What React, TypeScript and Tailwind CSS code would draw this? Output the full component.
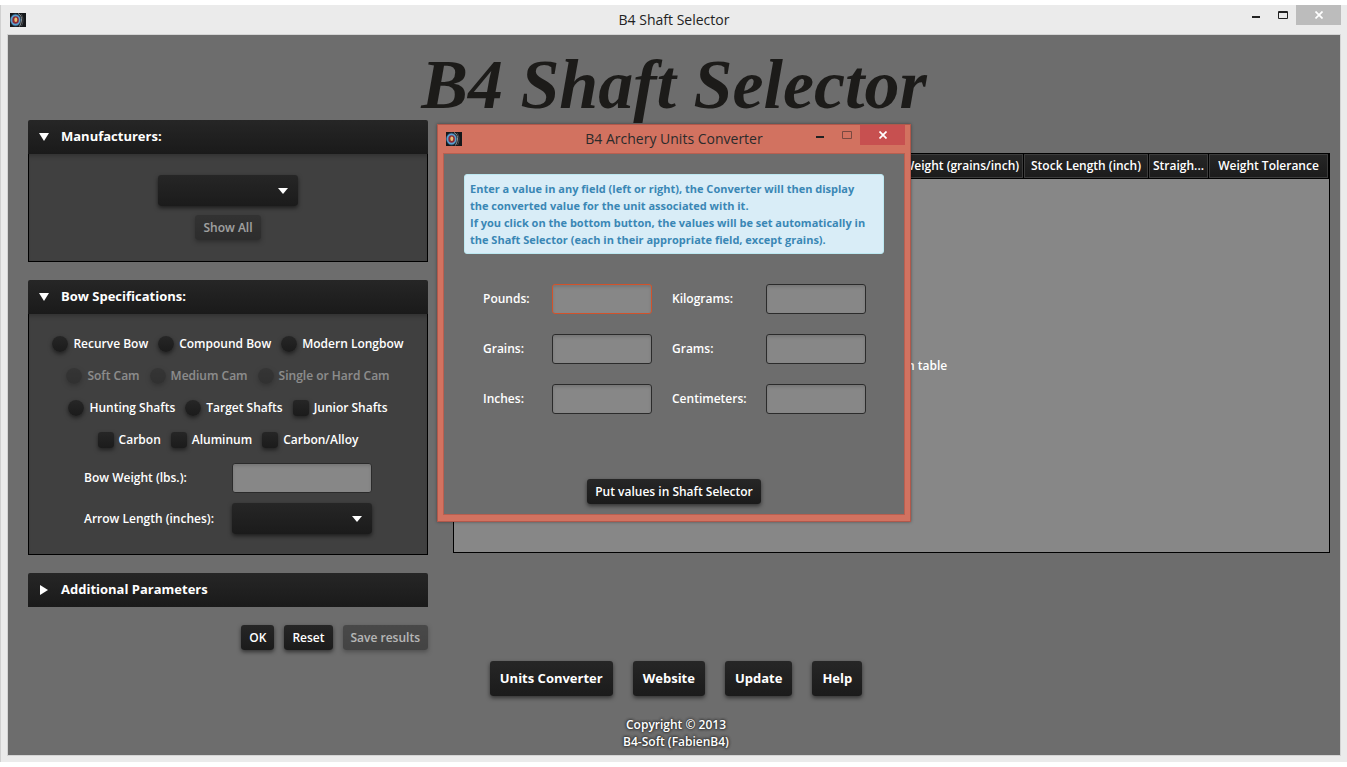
import React from 'react';

const buttonStyle =
  'rounded-[3px] bg-linear-to-b from-[#262626] to-[#1b1b1b] text-white shadow-[0_2px_4px_rgba(0,0,0,0.55)] whitespace-nowrap';
const smallButton = `${buttonStyle} h-[25px] px-2 text-xs font-semibold`;
const fieldStyle =
  'h-[30px] rounded-[3px] border bg-[#878787] px-2 text-xs text-white outline-none shadow-[inset_0_2px_3px_rgba(0,0,0,0.12)]';

const AppIcon = () => (
  <svg width="16" height="14" viewBox="0 0 16 14" aria-hidden="true" className="shrink-0">
    <rect width="16" height="14" fill="#15171a" />
    <ellipse cx="5.5" cy="7" rx="5.5" ry="6.4" fill="#28465c" />
    <ellipse cx="5.5" cy="7" rx="4.9" ry="5.6" fill="#5b9fd0" />
    <ellipse cx="5.6" cy="7" rx="3.3" ry="3.8" fill="#8c2a35" />
    <ellipse cx="5.8" cy="6.8" rx="1.5" ry="2.2" fill="#e8c070" />
    <path d="M8 .5c3 1.500 4 4 3.400 7.500c-.3 2-1 4-2 5.500" fill="none" stroke="#8f9296" />
    <path d="M11 1c2.500 3 2.700 8 .5 12" fill="none" stroke="#484b4f" />
  </svg>
);

const Arrow = ({ open = true }: { open?: boolean }) => (
  <svg width="10" height="10" viewBox="0 0 10 10" fill="#fff" aria-hidden="true" className="shrink-0">
    <path d={open ? 'M0 1h10L5 9z' : 'M1 0v10l8-5z'} />
  </svg>
);

interface WindowButtonsProps {
  disabledMaximize?: boolean;
  closeClass: string;
}

const WindowButtons: React.FC<WindowButtonsProps> = ({ disabledMaximize, closeClass }) => (
  <div className="flex items-start">
    <button type="button" aria-label="Minimize" className="flex h-5 w-[26px] items-center justify-center">
      <svg width="8" height="12" viewBox="0 0 8 12" fill="#222">
        <path d="M0 7h8v2H0z" />
      </svg>
    </button>
    <button
      type="button"
      aria-label="Maximize"
      disabled={disabledMaximize}
      className="flex h-5 w-[27px] items-center justify-center disabled:opacity-50"
    >
      <svg width="10" height="8" viewBox="0 0 10 8" fill="none" stroke="#222">
        <path d={disabledMaximize ? 'M.5.5h9v7h-9z' : 'M.5.5h9v7h-9zM0 1.500h10'} />
      </svg>
    </button>
    <button type="button" aria-label="Close" className={closeClass}>
      <svg width="8" height="8" viewBox="0 0 8 8" stroke="#fff" strokeWidth="1.700">
        <path d="M.5.5l7 7M7.500.5l-7 7" />
      </svg>
    </button>
  </div>
);

interface PanelProps {
  title: string;
  open?: boolean;
  children?: React.ReactNode;
}

const Panel: React.FC<PanelProps> = ({ title, open = true, children }) => (
  <section>
    <button
      type="button"
      aria-expanded={open}
      className="flex h-[34px] w-full items-center gap-3 rounded-t-xs bg-linear-to-b from-[#262626] to-[#1a1a1a] px-[11px] text-[13px] font-bold text-white"
    >
      <Arrow open={open} />
      {title}
    </button>
    {open && (
      <div className="border border-t-0 border-black bg-[#404040] shadow-[inset_0_5px_5px_-3px_rgba(0,0,0,0.25)]">
        {children}
      </div>
    )}
  </section>
);

const Dropdown = ({ id, label }: { id: string; label: string }) => (
  <div className="relative w-[140px]">
    <select id={id} aria-label={label} className={`${buttonStyle} block h-[31px] w-full appearance-none px-2 text-xs`}>
      <option></option>
    </select>
    <svg width="10" height="6" viewBox="0 0 10 6" fill="#fff" className="pointer-events-none absolute top-[13px] right-[10px]">
      <path d="M0 0h10L5 6z" />
    </svg>
  </div>
);

interface Option {
  label: string;
  type: 'radio' | 'checkbox';
  name: string;
  disabled?: boolean;
}

const optionRows: Option[][] = [
  [
    { label: 'Recurve Bow', type: 'radio', name: 'bow' },
    { label: 'Compound Bow', type: 'radio', name: 'bow' },
    { label: 'Modern Longbow', type: 'radio', name: 'bow' },
  ],
  [
    { label: 'Soft Cam', type: 'radio', name: 'cam', disabled: true },
    { label: 'Medium Cam', type: 'radio', name: 'cam', disabled: true },
    { label: 'Single or Hard Cam', type: 'radio', name: 'cam', disabled: true },
  ],
  [
    { label: 'Hunting Shafts', type: 'radio', name: 'shafts' },
    { label: 'Target Shafts', type: 'radio', name: 'shafts' },
    { label: 'Junior Shafts', type: 'checkbox', name: 'junior' },
  ],
  [
    { label: 'Carbon', type: 'checkbox', name: 'carbon' },
    { label: 'Aluminum', type: 'checkbox', name: 'aluminum' },
    { label: 'Carbon/Alloy', type: 'checkbox', name: 'alloy' },
  ],
];

const converterFields = ['Pounds', 'Kilograms', 'Grains', 'Grams', 'Inches', 'Centimeters'];

const OptionItem: React.FC<Option> = ({ label, type, name, disabled }) => (
  <label className={`flex items-center gap-[5px] whitespace-nowrap ${disabled ? 'opacity-40' : ''}`}>
    <input
      type={type}
      name={name}
      disabled={disabled}
      className={`size-4 appearance-none bg-linear-to-b from-[#262626] to-[#1b1b1b] shadow-[0_2px_4px_rgba(0,0,0,0.5)] checked:bg-white ${
        type === 'radio' ? 'rounded-full' : 'rounded-[3px]'
      }`}
    />
    {label}
  </label>
);

const headerCell =
  'h-6 overflow-hidden border border-[#3c3c3c] bg-linear-to-b from-[#262626] to-[#1b1b1b] p-0 text-center font-semibold text-ellipsis whitespace-nowrap';

const ResultsTable = () => (
  <div className="flex h-[400px] flex-col border border-black bg-[#878787]">
    <table className="w-full table-fixed border-separate border-spacing-x-px border-spacing-y-0 bg-black text-xs">
      <colgroup>
        <col />
        <col className="w-[124px]" />
        <col className="w-[124px]" />
        <col className="w-[59px]" />
        <col className="w-[119px]" />
      </colgroup>
      <thead>
        <tr>
          <td className={headerCell}></td>
          <th className={headerCell}>Weight (grains/inch)</th>
          <th className={headerCell}>Stock Length (inch)</th>
          <th className={headerCell}>Straigh...</th>
          <th className={headerCell}>Weight Tolerance</th>
        </tr>
      </thead>
    </table>
    <div className="flex flex-1 items-center justify-center border-t border-black">No content in table</div>
  </div>
);

const UnitsConverter = () => (
  <div
    role="dialog"
    aria-label="B4 Archery Units Converter"
    className="absolute top-[124px] left-[437px] w-[474px] border border-[#b0584b] bg-[#d27260] px-[5px] pb-[6px] shadow-[0_0_3px_rgba(0,0,0,0.4)]"
  >
    <div className="grid h-7 grid-cols-[1fr_auto_1fr] items-center">
      <div className="pl-[3px]">
        <AppIcon />
      </div>
      <h2 className="text-sm font-normal text-[#2b2b2b]">B4 Archery Units Converter</h2>
      <div className="flex justify-end self-start">
        <WindowButtons
          disabledMaximize
          closeClass="flex h-5 w-[45px] items-center justify-center bg-[#c75050]"
        />
      </div>
    </div>
    <div className="border border-[#b85f50] bg-[#6d6d6d] px-5 pt-5 pb-[10px]">
      <p className="rounded-[3px] border border-[#bce8f1] bg-[#d9edf7] p-[5px] text-[11px] leading-[17px] font-bold whitespace-nowrap text-[#3a87b5]">
        Enter a value in any field (left or right), the Converter will then display
        <br />
        the converted value for the unit associated with it.
        <br />
        If you click on the bottom button, the values will be set automatically in
        <br />
        the Shaft Selector (each in their appropriate field, except grains).
      </p>
      <form className="mt-[30px] grid grid-cols-[69px_100px_94px_100px] items-center gap-y-5 pl-[19px]">
        {converterFields.map((field, index) => (
          <React.Fragment key={field}>
            <label htmlFor={field} className={index % 2 ? 'pl-5' : ''}>
              {field}:
            </label>
            <input
              id={field}
              type="text"
              className={`${fieldStyle} ${index % 2 ? 'ml-5 w-[100px]' : 'w-full'} ${
                index === 0 ? 'border-[#d2522a]' : 'border-[#2b2b2b]'
              }`}
            />
          </React.Fragment>
        ))}
      </form>
      <div className="mt-[65px] flex justify-center">
        <button type="button" className={smallButton}>
          Put values in Shaft Selector
        </button>
      </div>
    </div>
  </div>
);

const App = () => {
  return (
    <div className="relative flex min-h-screen flex-col bg-white py-[5px] font-['Open_Sans',sans-serif] text-xs font-semibold text-white">
      <div className="flex flex-1 flex-col border-l border-[#d0d0d0] bg-[#ebebeb] pr-[6px] pb-[6px] pl-[6px]">
        <div className="grid h-[29px] grid-cols-[1fr_auto_1fr] items-center">
          <div className="pl-[3px]">
            <AppIcon />
          </div>
          <p className="text-sm font-normal text-[#222]">B4 Shaft Selector</p>
          <div className="flex justify-end self-start">
            <WindowButtons closeClass="flex h-5 w-[45px] items-center justify-center bg-[#bcbcbc]" />
          </div>
        </div>
        <main className="flex-1 border border-[#d4d4d4] bg-[#6d6d6d]">
          <h1 className="h-[85px] text-center font-['Liberation_Serif',serif] text-[70px] leading-[100px] font-bold text-[#1c1b19] italic">
            B4 Shaft Selector
          </h1>
          <div className="flex items-start gap-[25px] pr-[10px] pl-5">
            <div className="flex w-[400px] shrink-0 flex-col gap-[18px]">
              <Panel title="Manufacturers:">
                <div className="flex flex-col items-center gap-[9px] pt-[21px] pb-[21px]">
                  <Dropdown id="manufacturer" label="Manufacturer" />
                  <button type="button" disabled className={`${smallButton} opacity-50`}>
                    Show All
                  </button>
                </div>
              </Panel>
              <Panel title="Bow Specifications:">
                <div className="flex flex-col gap-4 pt-[22px]">
                  {optionRows.map((row, index) => (
                    <div key={index} className="flex h-4 justify-center gap-[10px]">
                      {row.map((option) => (
                        <OptionItem key={option.label} {...option} />
                      ))}
                    </div>
                  ))}
                </div>
                <div className="grid grid-cols-[148px_140px] items-center justify-center gap-y-[10px] pt-[15px] pb-5">
                  <label htmlFor="bow-weight">Bow Weight (lbs.):</label>
                  <input id="bow-weight" type="text" className={`${fieldStyle} border-[#2b2b2b]`} />
                  <label htmlFor="arrow-length">Arrow Length (inches):</label>
                  <Dropdown id="arrow-length" label="Arrow Length (inches)" />
                </div>
              </Panel>
              <Panel title="Additional Parameters" open={false} />
              <div className="flex justify-end gap-[10px]">
                <button type="button" className={smallButton}>OK</button>
                <button type="button" className={smallButton}>Reset</button>
                <button type="button" disabled className={`${smallButton} opacity-50`}>
                  Save results
                </button>
              </div>
            </div>
            <div className="min-w-0 flex-1 pt-[33px]">
              <ResultsTable />
            </div>
          </div>
          <footer className="flex flex-col items-center pt-[11px] pl-1">
            <nav className="flex gap-5">
              {['Units Converter', 'Website', 'Update', 'Help'].map((name) => (
                <button key={name} type="button" className={`${buttonStyle} h-[35px] px-[10px] text-[13px] font-bold`}>
                  {name}
                </button>
              ))}
            </nav>
            <p className="mt-5 text-center leading-[17px] [text-shadow:0_0_3px_#333,0_0_3px_#333,0_0_2px_#333]">
              Copyright © 2013
              <br />
              B4-Soft (FabienB4)
            </p>
          </footer>
        </main>
      </div>
      <UnitsConverter />
    </div>
  );
};

export default App;
